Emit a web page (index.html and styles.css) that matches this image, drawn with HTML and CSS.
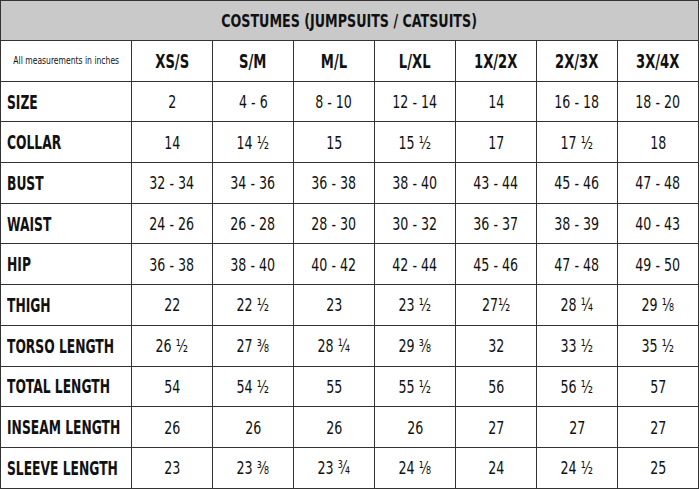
FILE: index.html
```html
<!DOCTYPE html>
<html>
<head>
<meta charset="utf-8">
<link rel="stylesheet" href="styles.css">
</head>
<body>
<table class="chart">
  <colgroup>
    <col class="c-label">
    <col class="c-size"><col class="c-size"><col class="c-size"><col class="c-size">
    <col class="c-size"><col class="c-size"><col class="c-size">
  </colgroup>
  <thead>
    <tr class="title-row"><th colspan="8" class="title"><span class="t">COSTUMES (JUMPSUITS / CATSUITS)</span></th></tr>
    <tr class="head-row">
      <th class="note"><span class="t">All measurements in inches</span></th>
      <th><span class="t">XS/S</span></th><th><span class="t">S/M</span></th><th><span class="t">M/L</span></th><th><span class="t">L/XL</span></th><th><span class="t">1X/2X</span></th><th><span class="t">2X/3X</span></th><th><span class="t">3X/4X</span></th>
    </tr>
  </thead>
  <tbody>
    <tr><th class="lbl"><span class="t">SIZE</span></th><td><span class="t">2</span></td><td><span class="t">4 - 6</span></td><td><span class="t">8 - 10</span></td><td><span class="t">12 - 14</span></td><td><span class="t">14</span></td><td><span class="t">16 - 18</span></td><td><span class="t">18 - 20</span></td></tr>
    <tr><th class="lbl"><span class="t">COLLAR</span></th><td><span class="t">14</span></td><td><span class="t">14 ½</span></td><td><span class="t">15</span></td><td><span class="t">15 ½</span></td><td><span class="t">17</span></td><td><span class="t">17 ½</span></td><td><span class="t">18</span></td></tr>
    <tr><th class="lbl"><span class="t">BUST</span></th><td><span class="t">32 - 34</span></td><td><span class="t">34 - 36</span></td><td><span class="t">36 - 38</span></td><td><span class="t">38 - 40</span></td><td><span class="t">43 - 44</span></td><td><span class="t">45 - 46</span></td><td><span class="t">47 - 48</span></td></tr>
    <tr><th class="lbl"><span class="t">WAIST</span></th><td><span class="t">24 - 26</span></td><td><span class="t">26 - 28</span></td><td><span class="t">28 - 30</span></td><td><span class="t">30 - 32</span></td><td><span class="t">36 - 37</span></td><td><span class="t">38 - 39</span></td><td><span class="t">40 - 43</span></td></tr>
    <tr><th class="lbl"><span class="t">HIP</span></th><td><span class="t">36 - 38</span></td><td><span class="t">38 - 40</span></td><td><span class="t">40 - 42</span></td><td><span class="t">42 - 44</span></td><td><span class="t">45 - 46</span></td><td><span class="t">47 - 48</span></td><td><span class="t">49 - 50</span></td></tr>
    <tr><th class="lbl"><span class="t">THIGH</span></th><td><span class="t">22</span></td><td><span class="t">22 ½</span></td><td><span class="t">23</span></td><td><span class="t">23 ½</span></td><td><span class="t">27½</span></td><td><span class="t">28 ¼</span></td><td><span class="t">29 ⅛</span></td></tr>
    <tr><th class="lbl"><span class="t">TORSO LENGTH</span></th><td><span class="t">26 ½</span></td><td><span class="t">27 ⅜</span></td><td><span class="t">28 ¼</span></td><td><span class="t">29 ⅜</span></td><td><span class="t">32</span></td><td><span class="t">33 ½</span></td><td><span class="t">35 ½</span></td></tr>
    <tr><th class="lbl"><span class="t">TOTAL LENGTH</span></th><td><span class="t">54</span></td><td><span class="t">54 ½</span></td><td><span class="t">55</span></td><td><span class="t">55 ½</span></td><td><span class="t">56</span></td><td><span class="t">56 ½</span></td><td><span class="t">57</span></td></tr>
    <tr><th class="lbl"><span class="t">INSEAM LENGTH</span></th><td><span class="t">26</span></td><td><span class="t">26</span></td><td><span class="t">26</span></td><td><span class="t">26</span></td><td><span class="t">27</span></td><td><span class="t">27</span></td><td><span class="t">27</span></td></tr>
    <tr><th class="lbl"><span class="t">SLEEVE LENGTH</span></th><td><span class="t">23</span></td><td><span class="t">23 ⅜</span></td><td><span class="t">23 ¾</span></td><td><span class="t">24 ⅛</span></td><td><span class="t">24</span></td><td><span class="t">24 ½</span></td><td><span class="t">25</span></td></tr>
  </tbody>
</table>
</body>
</html>
```
FILE: styles.css
```css
html, body {
  margin: 0;
  padding: 0;
  background: #ffffff;
}
.chart {
  width: 699px;
  border-collapse: collapse;
  table-layout: fixed;
  font-family: "DejaVu Sans Condensed", "DejaVu Sans", sans-serif;
  color: #111;
}
.c-label { width: 131px; }
.c-size { width: 81px; }
.chart th, .chart td {
  border: 1.5px solid #333;
  padding: 0;
  text-align: center;
  vertical-align: middle;
  height: 39.7px;
  white-space: nowrap;
}
.t {
  display: inline-block;
  transform: scaleX(0.78);
  transform-origin: center;
}
.chart .title {
  background: #c9c9c9;
  font-size: 17px;
  font-weight: 700;
  height: 39px;
}
.chart .title .t { transform: scaleX(0.83); }
.head-row th {
  font-size: 20px;
  font-weight: 700;
}
.head-row th .t { transform: scaleX(0.73); }
.chart .note {
  font-size: 10px;
  font-weight: 400;
}
.chart .note .t { transform: scaleX(0.85); }
.chart .lbl {
  text-align: left;
  padding-left: 6px;
  font-size: 19px;
  font-weight: 700;
  overflow: visible;
}
.chart .lbl .t {
  transform: scaleX(0.72);
  transform-origin: left center;
}
tbody td {
  font-size: 18px;
  font-weight: 400;
}
```
